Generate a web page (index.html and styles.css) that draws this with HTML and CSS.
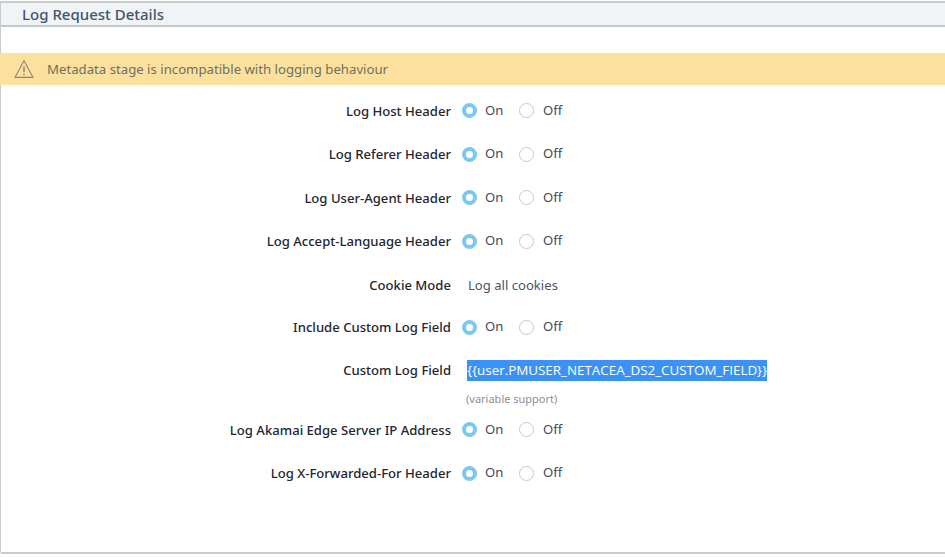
FILE: index.html
```html
<!DOCTYPE html>
<html lang="en">
<head>
<meta charset="utf-8">
<title>Log Request Details</title>
<link rel="stylesheet" href="styles.css">
</head>
<body>
<section class="panel">
  <header class="panel-head">Log Request Details</header>
  <div class="banner">
    <svg class="warn" width="20" height="20" viewBox="0 0 20 20" fill="none" stroke="#8a8778" stroke-width="1.1" aria-hidden="true">
      <path d="M10 1.8 L19 18.4 H1 Z" stroke-linejoin="round"/>
      <path d="M10 7.5 V13.2" stroke-width="1.4"/>
      <path d="M10 14.8 V16.2" stroke-width="1.4"/>
    </svg>
    <span>Metadata stage is incompatible with logging behaviour</span>
  </div>
  <div class="form">
    <div class="row"><label class="lbl">Log Host Header</label><div class="radios"><i class="radio on"></i><span class="opt">On</span><i class="radio"></i><span class="opt">Off</span></div></div>
    <div class="row"><label class="lbl">Log Referer Header</label><div class="radios"><i class="radio on"></i><span class="opt">On</span><i class="radio"></i><span class="opt">Off</span></div></div>
    <div class="row"><label class="lbl">Log User-Agent Header</label><div class="radios"><i class="radio on"></i><span class="opt">On</span><i class="radio"></i><span class="opt">Off</span></div></div>
    <div class="row"><label class="lbl">Log Accept-Language Header</label><div class="radios"><i class="radio on"></i><span class="opt">On</span><i class="radio"></i><span class="opt">Off</span></div></div>
    <div class="row"><label class="lbl">Cookie Mode</label><div class="value">Log all cookies</div></div>
    <div class="row row-tight"><label class="lbl">Include Custom Log Field</label><div class="radios"><i class="radio on"></i><span class="opt">On</span><i class="radio"></i><span class="opt">Off</span></div></div>
    <div class="row row-field"><label class="lbl">Custom Log Field</label><div class="value"><span class="selected">{{user.PMUSER_NETACEA_DS2_CUSTOM_FIELD}}</span></div></div>
    <div class="hint">(variable support)</div>
    <div class="row"><label class="lbl">Log Akamai Edge Server IP Address</label><div class="radios"><i class="radio on"></i><span class="opt">On</span><i class="radio"></i><span class="opt">Off</span></div></div>
    <div class="row"><label class="lbl">Log X-Forwarded-For Header</label><div class="radios"><i class="radio on"></i><span class="opt">On</span><i class="radio"></i><span class="opt">Off</span></div></div>
  </div>
</section>
</body>
</html>
```
FILE: styles.css
```css
* { box-sizing: border-box; }
html, body { margin: 0; padding: 0; background: #fff; }
body {
  width: 945px;
  height: 557px;
  overflow: hidden;
  padding-top: 1px;
  font-family: "Noto Sans", "Open Sans", sans-serif;
  font-size: 13.1px;
  color: #2d3340;
}
.panel {
  height: 553px;
  border: 1px solid #c9cbcd;
  border-top-width: 2px;
  border-right: 0;
  border-bottom-width: 2px;
  border-radius: 0 0 0 3px;
}
.panel-head {
  height: 24px;
  padding-left: 21px;
  background: #f0f4f7;
  border-bottom: 2px solid #c4c7c9;
  font-size: 15px;
  font-weight: 500;
  line-height: 22px;
  color: #44546a;
}
.banner {
  display: flex;
  align-items: center;
  gap: 13px;
  height: 32px;
  margin-top: 26px;
  margin-left: -1px;
  padding-left: 14px;
  background: #fce19e;
  color: #6f6f61;
  font-size: 13.2px;
}
.warn { flex: none; }
.form { margin-top: 4px; }
.row {
  display: flex;
  align-items: center;
  height: 43.5px;
}
.row-tight { height: 41px; }
.row-field { height: 44px; }
.lbl {
  width: 450px;
  text-align: right;
  font-weight: 500;
  color: #23262e;
  white-space: nowrap;
}
.radios, .value {
  display: flex;
  align-items: center;
  margin-left: 11px;
}
.value { margin-left: 17px; color: #4c5563; }
.row-field .value { margin-left: 16px; }
.radio {
  display: block;
  width: 15px;
  height: 15px;
  border-radius: 50%;
  border: 1px solid #c8c8c8;
  background: #fff;
}
.radio.on { border: 4px solid #7cc8ee; }
.opt { width: 42px; padding-left: 8px; padding-bottom: 2px; color: #3f4a5a; }
.opt:last-child { width: auto; padding-left: 9px; }
.selected {
  display: block;
  margin-top: 2px;
  background: #3b92f4;
  color: #fff;
  line-height: 20px;
  height: 21px;
  font-family: "Open Sans", sans-serif;
  font-size: 13.4px;
}
.hint {
  height: 14px;
  margin-bottom: 2.5px;
  padding-left: 465px;
  font-size: 11px;
  line-height: 14px;
  color: #8a8f96;
}
```
